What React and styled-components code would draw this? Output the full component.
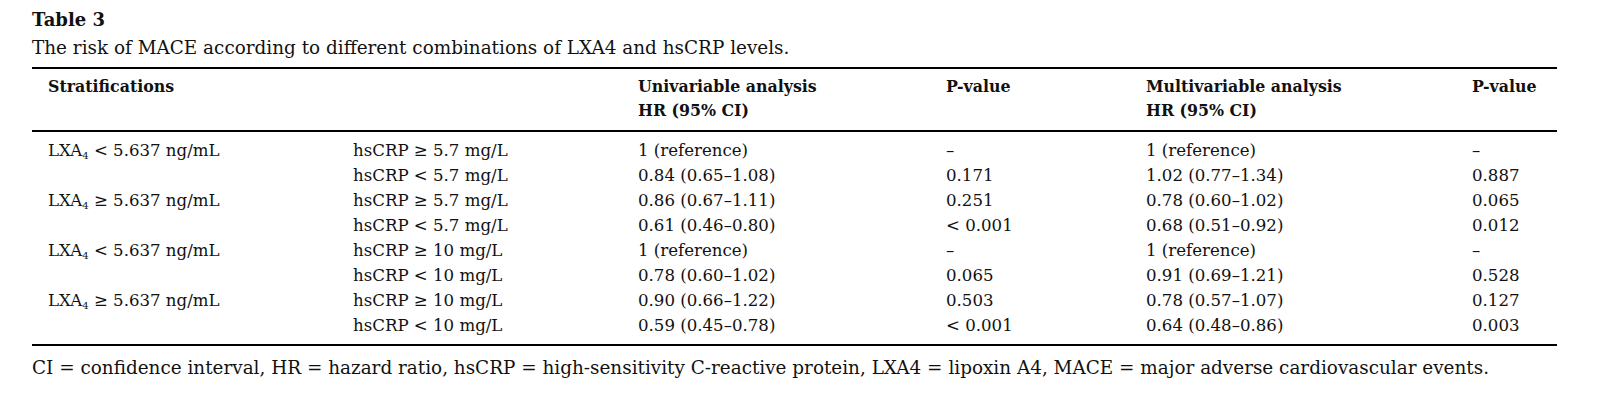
import React from "react";
import styled, { createGlobalStyle } from "styled-components";

const GlobalStyle = createGlobalStyle`
  html, body {
    margin: 0;
    padding: 0;
    background: #ffffff;
  }
  body {
    font-family: "DejaVu Serif", "Liberation Serif", serif;
    color: #111111;
  }
`;

const Page = styled.div`
  padding: 7px 42px 0 32px;
  width: 1525px;
`;

const Title = styled.h3`
  margin: 0;
  font-size: 18px;
  line-height: 26px;
  font-weight: bold;
`;

const Caption = styled.p`
  margin: 2px 0 6px;
  font-size: 18.4px;
  line-height: 26px;
  white-space: nowrap;
`;

const Table = styled.table`
  width: 1525px;
  border-collapse: collapse;
  table-layout: fixed;
  border-top: 2px solid #000;
  border-bottom: 2px solid #000;
`;

const HeadRow = styled.tr`
  border-bottom: 2px solid #000;
`;

const Th = styled.th`
  box-sizing: border-box;
  text-align: left;
  vertical-align: top;
  font-weight: bold;
  font-size: 15.8px;
  line-height: 24px;
  padding: 6px 0 7px ${(p) => (p.$first ? "16px" : "0")};
  width: ${(p) => p.$w}px;
  white-space: nowrap;
`;

const Td = styled.td`
  box-sizing: border-box;
  text-align: left;
  font-size: 16.6px;
  line-height: 25px;
  padding: ${(p) => (p.$top ? "6px" : "0")} 0 ${(p) => (p.$bottom ? "6px" : "0")}
    ${(p) => (p.$first ? "16px" : "0")};
  white-space: nowrap;
`;

const Sub = styled.sub`
  font-size: 10px;
  vertical-align: -3px;
  line-height: 0;
`;

const Footnote = styled.p`
  margin: 9px 0 0;
  font-size: 18.4px;
  line-height: 26px;
  white-space: nowrap;
`;

const cols = [321, 285, 308, 200, 326, 85];

const rows = [
  { lxa: "<", crp: "≥ 5.7", uni: "1 (reference)", p1: "–", multi: "1 (reference)", p2: "–" },
  { lxa: null, crp: "< 5.7", uni: "0.84 (0.65–1.08)", p1: "0.171", multi: "1.02 (0.77–1.34)", p2: "0.887" },
  { lxa: "≥", crp: "≥ 5.7", uni: "0.86 (0.67–1.11)", p1: "0.251", multi: "0.78 (0.60–1.02)", p2: "0.065" },
  { lxa: null, crp: "< 5.7", uni: "0.61 (0.46–0.80)", p1: "< 0.001", multi: "0.68 (0.51–0.92)", p2: "0.012" },
  { lxa: "<", crp: "≥ 10", uni: "1 (reference)", p1: "–", multi: "1 (reference)", p2: "–" },
  { lxa: null, crp: "< 10", uni: "0.78 (0.60–1.02)", p1: "0.065", multi: "0.91 (0.69–1.21)", p2: "0.528" },
  { lxa: "≥", crp: "≥ 10", uni: "0.90 (0.66–1.22)", p1: "0.503", multi: "0.78 (0.57–1.07)", p2: "0.127" },
  { lxa: null, crp: "< 10", uni: "0.59 (0.45–0.78)", p1: "< 0.001", multi: "0.64 (0.48–0.86)", p2: "0.003" },
];

const App = () => {
  return (
    <>
      <GlobalStyle />
      <Page>
        <Title>Table 3</Title>
        <Caption>
          The risk of MACE according to different combinations of LXA4 and hsCRP levels.
        </Caption>
        <Table>
          <thead>
            <HeadRow>
              <Th $first $w={cols[0]}>Stratifications</Th>
              <Th $w={cols[1]}></Th>
              <Th $w={cols[2]}>
                Univariable analysis
                <br />
                HR (95% CI)
              </Th>
              <Th $w={cols[3]}>P-value</Th>
              <Th $w={cols[4]}>
                Multivariable analysis
                <br />
                HR (95% CI)
              </Th>
              <Th $w={cols[5]}>P-value</Th>
            </HeadRow>
          </thead>
          <tbody>
            {rows.map((r, i) => {
              const top = i === 0;
              const bottom = i === rows.length - 1;
              return (
                <tr key={i}>
                  <Td $first $top={top} $bottom={bottom}>
                    {r.lxa && (
                      <>
                        LXA<Sub>4</Sub> {r.lxa} 5.637 ng/mL
                      </>
                    )}
                  </Td>
                  <Td $top={top} $bottom={bottom}>hsCRP {r.crp} mg/L</Td>
                  <Td $top={top} $bottom={bottom}>{r.uni}</Td>
                  <Td $top={top} $bottom={bottom}>{r.p1}</Td>
                  <Td $top={top} $bottom={bottom}>{r.multi}</Td>
                  <Td $top={top} $bottom={bottom}>{r.p2}</Td>
                </tr>
              );
            })}
          </tbody>
        </Table>
        <Footnote>
          CI = confidence interval, HR = hazard ratio, hsCRP = high-sensitivity C-reactive protein, LXA4 = lipoxin A4, MACE = major adverse cardiovascular events.
        </Footnote>
      </Page>
    </>
  );
};

export default App;
